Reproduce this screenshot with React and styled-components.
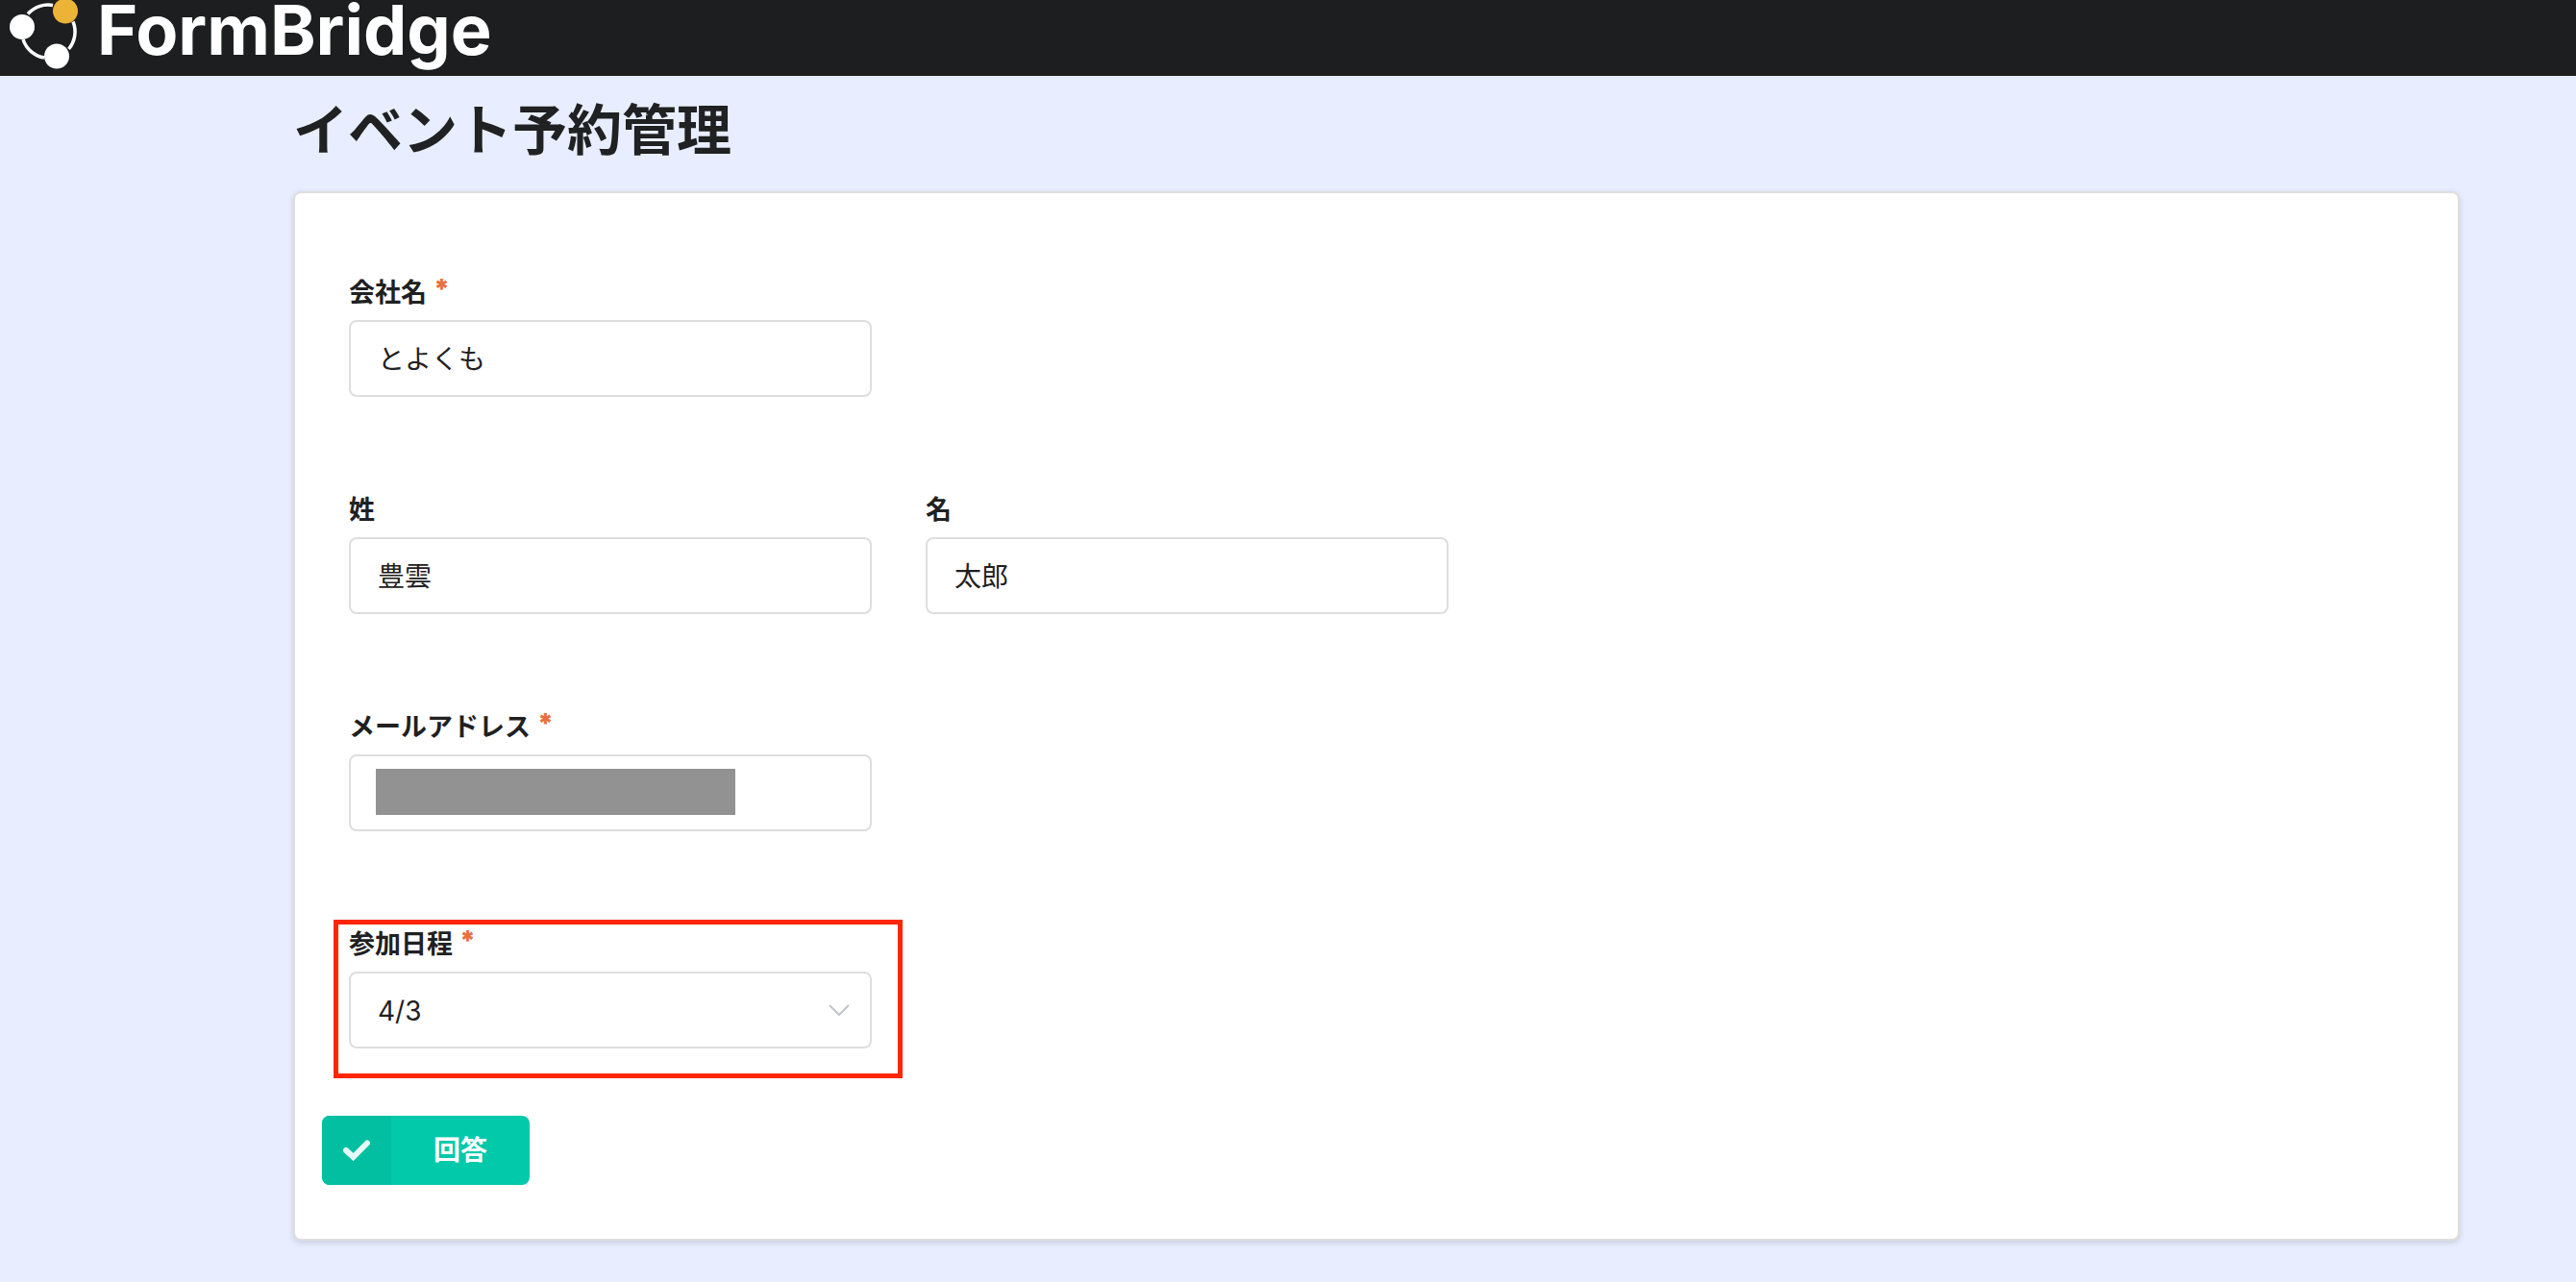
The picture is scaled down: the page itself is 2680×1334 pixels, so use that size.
import styled, { createGlobalStyle } from "styled-components";

function App() {
  return (
    <>
      <GlobalStyle />
      <Header>
        <LogoLink href="#" aria-label="FormBridge">
          <LogoMark />
          <LogoText>FormBridge</LogoText>
        </LogoLink>
      </Header>
      <Main>
        <Title>イベント予約管理</Title>
        <Form onSubmit={(e) => e.preventDefault()}>
          <Rows>
            <Row>
              <Field>
                <FieldLabel htmlFor="company">
                  会社名<Required>*</Required>
                </FieldLabel>
                <Input id="company" defaultValue="とよくも" required />
              </Field>
            </Row>
            <Row>
              <Field>
                <FieldLabel htmlFor="lastName">姓</FieldLabel>
                <Input id="lastName" defaultValue="豊雲" />
              </Field>
              <Field>
                <FieldLabel htmlFor="firstName">名</FieldLabel>
                <Input id="firstName" defaultValue="太郎" />
              </Field>
            </Row>
            <Row>
              <Field>
                <FieldLabel htmlFor="email">
                  メールアドレス<Required>*</Required>
                </FieldLabel>
                <Control>
                  <Input id="email" type="email" required />
                  <Mask />
                </Control>
              </Field>
            </Row>
            <Row>
              <Field $highlight>
                <FieldLabel htmlFor="date">
                  参加日程<Required>*</Required>
                </FieldLabel>
                <Control>
                  <Select id="date" defaultValue="4/3" required>
                    <option>4/3</option>
                  </Select>
                  <Chevron viewBox="0 0 22 12" aria-hidden="true">
                    <path d="M1 1l10 10L21 1" />
                  </Chevron>
                </Control>
              </Field>
            </Row>
          </Rows>
          <SubmitButton type="submit">
            <ButtonIcon>
              <svg width="28" height="22" viewBox="0 0 28 22" aria-hidden="true">
                <path d="M3 11l7.5 7L25 3.5" />
              </svg>
            </ButtonIcon>
            <ButtonText>回答</ButtonText>
          </SubmitButton>
        </Form>
      </Main>
    </>
  );
}

// Tres nodos unidos por un anillo
function LogoMark() {
  return (
    <Mark viewBox="0 0 72 74" aria-hidden="true">
      <g fill="none" stroke="#fff" strokeWidth="3.5">
        <path d="M19 14.500A28 28 0 0 1 45 5.500" />
        <path d="M66 22.500A28 28 0 0 1 61.500 51" />
        <path d="M36 60A28 28 0 0 1 14 41" />
      </g>
      <circle cx="13" cy="28" r="13" fill="#fff" />
      <circle cx="49" cy="58.500" r="13" fill="#fff" />
      <circle cx="58" cy="11.500" r="13" fill="#edb337" />
    </Mark>
  );
}

export default App;

const GlobalStyle = createGlobalStyle`
  * {
    box-sizing: border-box;
  }

  body {
    margin: 0;
    min-height: 100vh;
    background: #e8eeff;
    color: #1f2122;
    font-family: Inter, "Noto Sans CJK JP", sans-serif;
    font-size: 28px;
  }

  input, select, button {
    font: inherit;
    color: inherit;
  }
`;

const Header = styled.header`
  height: 79px;
  padding-left: 10px;
  background: #1c1e1f;
`;

const LogoLink = styled.a`
  display: inline-flex;
  align-items: flex-start;
  gap: 19px;
  color: #fff;
  text-decoration: none;
`;

const Mark = styled.svg`
  width: 72px;
  height: 74px;
`;

const LogoText = styled.span`
  font-size: 72px;
  font-weight: 700;
  line-height: 62px;
`;

const Main = styled.main`
  padding: 29px 121px 43px 305px;
`;

const Title = styled.h1`
  margin: 0 0 35px;
  font-size: 57px;
  font-weight: 700;
  line-height: 56px;
`;

const Form = styled.form`
  padding: 82px 28px 56px;
  border: 2px solid #dedede;
  border-radius: 8px;
  background: #fff;
  box-shadow: 0 2px 6px rgba(0, 0, 0, 0.15);
`;

const Rows = styled.div`
  display: flex;
  flex-direction: column;
  gap: 96px;
  padding: 0 28px;
  margin-bottom: 70px;
`;

const Row = styled.div`
  display: flex;
  gap: 56px;
`;

const Field = styled.div`
  position: relative;
  flex: 0 1 544px;

  /* Marco rojo alrededor del campo destacado */
  &::after {
    content: "";
    display: ${({ $highlight }) => ($highlight ? "block" : "none")};
    position: absolute;
    inset: -4px -32px -31px -16px;
    border: 5px solid #ff2600;
    pointer-events: none;
  }
`;

const FieldLabel = styled.label`
  display: flex;
  gap: 7px;
  margin-bottom: 6px;
  font-size: 27px;
  font-weight: 700;
  line-height: 44px;
`;

const Required = styled.span`
  color: #e96f3e;
  font-size: 28px;
  font-weight: 900;
  line-height: 37px;
`;

const Control = styled.div`
  position: relative;
`;

const Input = styled.input`
  display: block;
  width: 100%;
  height: 80px;
  padding: 0 28px 2px;
  border: 2px solid #dedede;
  border-radius: 8px;
  background: #fff;
  outline: none;
`;

const Select = styled.select`
  display: block;
  width: 100%;
  height: 80px;
  padding: 2px 60px 0 28px;
  border: 2px solid #dedede;
  border-radius: 8px;
  background: #fff;
  appearance: none;
  outline: none;
`;

const Mask = styled.span`
  position: absolute;
  top: 15px;
  left: 28px;
  width: 374px;
  height: 48px;
  background: #929292;
`;

const Chevron = styled.svg`
  position: absolute;
  top: 34px;
  right: 23px;
  width: 22px;
  height: 12px;
  fill: none;
  stroke: #c0c4cc;
  stroke-width: 2;
  pointer-events: none;
`;

const SubmitButton = styled.button`
  display: flex;
  width: 216px;
  height: 72px;
  padding: 0;
  border: 0;
  border-radius: 8px;
  overflow: hidden;
  background: #03c9ab;
  color: #fff;
  font-weight: 700;
  cursor: pointer;
`;

const ButtonIcon = styled.span`
  display: flex;
  align-items: center;
  justify-content: center;
  width: 72px;
  height: 72px;
  background: #02bfa2;

  path {
    fill: none;
    stroke: #e5faf6;
    stroke-width: 6;
    stroke-linecap: round;
  }
`;

const ButtonText = styled.span`
  flex: 1;
  line-height: 72px;
`;
